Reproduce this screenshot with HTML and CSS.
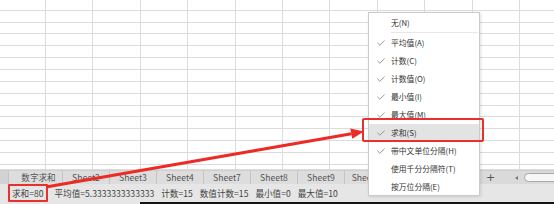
FILE: index.html
```html
<!DOCTYPE html>
<html lang="zh">
<head>
<meta charset="utf-8">
<link rel="stylesheet" href="styles.css">
</head>
<body>
<div class="page">
  <div class="grid">
    <div></div><div></div><div></div><div></div><div></div><div></div><div></div><div></div><div></div><div></div><div></div><div></div>
    <div></div><div></div><div></div><div></div><div></div><div></div><div></div><div></div><div></div><div></div><div></div><div></div>
    <div></div><div></div><div></div><div></div><div></div><div></div><div></div><div></div><div></div><div></div><div></div><div></div>
    <div></div><div></div><div></div><div></div><div></div><div></div><div></div><div></div><div></div><div></div><div></div><div></div>
    <div></div><div></div><div></div><div></div><div></div><div></div><div></div><div></div><div></div><div></div><div></div><div></div>
    <div></div><div></div><div></div><div></div><div></div><div></div><div></div><div></div><div></div><div></div><div></div><div></div>
    <div></div><div></div><div></div><div></div><div></div><div></div><div></div><div></div><div></div><div></div><div></div><div></div>
    <div></div><div></div><div></div><div></div><div></div><div></div><div></div><div></div><div></div><div></div><div></div><div></div>
    <div></div><div></div><div></div><div></div><div></div><div></div><div></div><div></div><div></div><div></div><div></div><div></div>
    <div></div><div></div><div></div><div></div><div></div><div></div><div></div><div></div><div></div><div></div><div></div><div></div>
    <div></div><div></div><div></div><div></div><div></div><div></div><div></div><div></div><div></div><div></div><div></div><div></div>
    <div></div><div></div><div></div><div></div><div></div><div></div><div></div><div></div><div></div><div></div><div></div><div></div>
    <div></div><div></div><div></div><div></div><div></div><div></div><div></div><div></div><div></div><div></div><div></div><div></div>
    <div></div><div></div><div></div><div></div><div></div><div></div><div></div><div></div><div></div><div></div><div></div><div></div>
    <div></div><div></div><div></div><div></div><div></div><div></div><div></div><div></div><div></div><div></div><div></div><div></div>
  </div>

  <div class="tabbar">
    <div class="tab-stub"></div>
    <div class="tab tab-first">数字求和</div>
    <div class="tab">Sheet2</div>
    <div class="tab">Sheet3</div>
    <div class="tab">Sheet4</div>
    <div class="tab">Sheet7</div>
    <div class="tab">Sheet8</div>
    <div class="tab">Sheet9</div>
    <div class="tab">Sheet10</div>
    <div class="tab-space"></div>
    <div class="tab-controls">
      <span class="plus">+</span>
      <span class="vbar"></span>
      <span class="tri"></span>
      <span class="track"></span>
    </div>
  </div>

  <div class="statusbar">
    <span class="stat stat-sum">求和=80</span>
    <span class="stat">平均值=5.3333333333333</span>
    <span class="stat">计数=15</span>
    <span class="stat">数值计数=15</span>
    <span class="stat">最小值=0</span>
    <span class="stat">最大值=10</span>
  </div>
  <div class="bottom-edge"><span class="edge-light"></span><span class="edge-dark"></span></div>

  <div class="menu">
    <div class="item"><span class="chk"></span><span class="lbl">无(N)</span></div>
    <div class="sep"></div>
    <div class="item"><span class="chk"><svg viewBox="0 0 8 6" width="8" height="6"><polyline points="0.4,2.8 2.8,5.2 7.6,0.6" /></svg></span><span class="lbl">平均值(A)</span></div>
    <div class="item"><span class="chk"><svg viewBox="0 0 8 6" width="8" height="6"><polyline points="0.4,2.8 2.8,5.2 7.6,0.6" /></svg></span><span class="lbl">计数(C)</span></div>
    <div class="item"><span class="chk"><svg viewBox="0 0 8 6" width="8" height="6"><polyline points="0.4,2.8 2.8,5.2 7.6,0.6" /></svg></span><span class="lbl">计数值(O)</span></div>
    <div class="item"><span class="chk"><svg viewBox="0 0 8 6" width="8" height="6"><polyline points="0.4,2.8 2.8,5.2 7.6,0.6" /></svg></span><span class="lbl">最小值(I)</span></div>
    <div class="item"><span class="chk"><svg viewBox="0 0 8 6" width="8" height="6"><polyline points="0.4,2.8 2.8,5.2 7.6,0.6" /></svg></span><span class="lbl">最大值(M)</span></div>
    <div class="item item-hover"><span class="chk"><svg viewBox="0 0 8 6" width="8" height="6"><polyline points="0.4,2.8 2.8,5.2 7.6,0.6" /></svg></span><span class="lbl">求和(S)</span></div>
    <div class="item"><span class="chk"><svg viewBox="0 0 8 6" width="8" height="6"><polyline points="0.4,2.8 2.8,5.2 7.6,0.6" /></svg></span><span class="lbl">带中文单位分隔(H)</span></div>
    <div class="item"><span class="chk"></span><span class="lbl">使用千分分隔符(T)</span></div>
    <div class="item"><span class="chk"></span><span class="lbl">按万位分隔(E)</span></div>
  </div>

  <div class="mark-box"></div>
  <svg class="arrow" viewBox="0 0 554 204" width="554" height="204">
    <line x1="46" y1="187" x2="351.5" y2="133.7" />
    <polygon points="364,131.4 352.3,138.8 350.3,128.6" />
  </svg>
</div>
</body>
</html>
```
FILE: styles.css
```css
html, body {
  margin: 0;
  padding: 0;
  background: #ffffff;
}

.page {
  position: relative;
  width: 554px;
  height: 204px;
  overflow: hidden;
  font-family: "Noto Sans CJK SC", "Microsoft YaHei", sans-serif;
  color: #444;
}

/* spreadsheet grid */
.grid {
  display: grid;
  grid-template-columns: 46px repeat(11, 47.4px);
  grid-template-rows: 10.7px repeat(13, 11.86px) 1fr;
  height: 170px;
  overflow: hidden;
  background: #fff;
}
.grid > div {
  box-sizing: border-box;
  border-right: 1px solid #dcdcdc;
  border-bottom: 1px solid #dcdcdc;
}

/* sheet tabs */
.tabbar {
  display: flex;
  height: 13px;
  border-top: 1px solid #cfcfcf;
  background: #dadada;
  font-size: 8.6px;
  line-height: 13px;
  color: #555;
}
.tab-stub {
  width: 9px;
  flex-shrink: 0;
  border-right: 1px solid #c4c4c4;
  box-sizing: border-box;
  background: #d2d2d2;
}
.tab {
  width: 47px;
  flex-shrink: 0;
  box-sizing: border-box;
  border-right: 1px solid #c4c4c4;
  text-align: center;
  white-space: nowrap;
  overflow: hidden;
  background: #dddddd;
}
.tab-first {
  width: 54px;
  padding-left: 6px;
}
.tab-space {
  flex: 1;
}
.tab-controls {
  width: 74px;
  flex-shrink: 0;
  display: flex;
  align-items: center;
  overflow: hidden;
}
.plus {
  margin-left: 6px;
  width: 10px;
  text-align: center;
  font-family: "DejaVu Sans", sans-serif;
  font-size: 11px;
  line-height: 13px;
  color: #555;
}
.vbar {
  margin-left: 11px;
  width: 2px;
  height: 7px;
  background: #bdbdbd;
}
.tri {
  margin-left: 9px;
  width: 0;
  height: 0;
  border-top: 2.5px solid transparent;
  border-bottom: 2.5px solid transparent;
  border-right: 3px solid #777;
}
.track {
  margin-left: 6px;
  width: 40px;
  height: 9px;
  flex-shrink: 0;
  box-sizing: border-box;
  border: 1px solid #a8a8a8;
  border-radius: 5px;
  background: #f7f7f7;
}

/* status bar */
.statusbar {
  display: flex;
  align-items: stretch;
  gap: 7px;
  height: 18px;
  padding-left: 8px;
  background: #e6e6e6;
  font-size: 8.6px;
  color: #444;
  white-space: nowrap;
}
.stat {
  display: flex;
  align-items: center;
}
.stat-sum {
  box-sizing: border-box;
  border: 2px solid #e8302c;
  border-radius: 1px;
  padding: 0 2px;
}

.bottom-edge {
  display: flex;
  height: 2px;
}
.edge-light {
  width: 140px;
  background: #e6e6e6;
}
.edge-dark {
  flex: 1;
  background: #141414;
}

/* context menu */
.menu {
  position: absolute;
  left: 368px;
  top: 12px;
  width: 112px;
  height: 184px;
  box-sizing: border-box;
  padding-top: 1px;
  background: #fff;
  border: 1px solid #cacaca;
  box-shadow: 1px 1px 3px rgba(0, 0, 0, 0.12);
  font-size: 7.8px;
  color: #333;
}
.item {
  display: flex;
  align-items: center;
  height: 18px;
  padding-left: 8px;
}
.item-hover {
  background: #e3e3e3;
}
.chk {
  width: 8px;
  height: 6px;
  margin-right: 6px;
  display: flex;
}
.chk svg polyline {
  fill: none;
  stroke: #8c8c8c;
  stroke-width: 0.9;
}
.lbl {
  white-space: nowrap;
  line-height: 18px;
}
.sep {
  height: 1px;
  margin: 0 1px 1px 22px;
  background: #e6e6e6;
}

/* annotations */
.mark-box {
  position: absolute;
  left: 362px;
  top: 118px;
  width: 122px;
  height: 24px;
  box-sizing: border-box;
  border: 2px solid #e8302c;
  border-radius: 2px;
}
.arrow {
  position: absolute;
  left: 0;
  top: 0;
  pointer-events: none;
}
.arrow line {
  stroke: #ec2a26;
  stroke-width: 3;
}
.arrow polygon {
  fill: #ec2a26;
}
```
